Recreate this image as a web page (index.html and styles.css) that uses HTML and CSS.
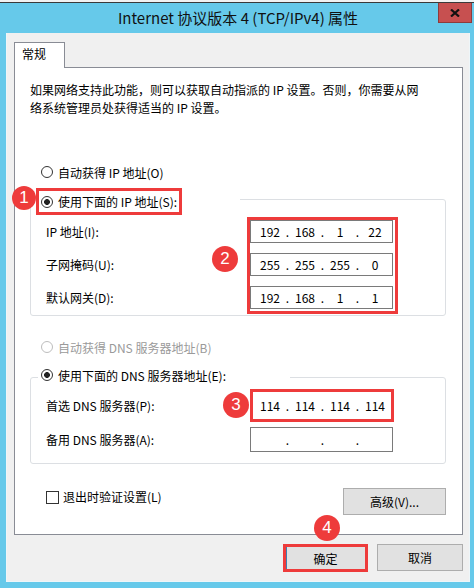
FILE: index.html
```html
<!DOCTYPE html>
<html lang="zh-CN">
<head>
<meta charset="UTF-8" />
<title>Internet 协议版本 4 (TCP/IPv4) 属性</title>
<link rel="stylesheet" href="styles.css">
</head>
<body>
<div class="strip"></div>
<div class="titlebar">
  <div class="title">Internet 协议版本 4 (TCP/IPv4) 属性</div>
  <div class="close"><svg width="10" height="8" viewBox="0 0 10 8"><path d="M1 0.5 L9 7.5 M9 0.5 L1 7.5" stroke="#111" stroke-width="2.2" fill="none"/></svg></div>
</div>
<div class="window">
  <div class="tab">常规</div>
  <div class="panel">
    <p class="desc">如果网络支持此功能，则可以获取自动指派的 IP 设置。否则，你需要从网<br>络系统管理员处获得适当的 IP 设置。</p>
    <div class="radio"><span class="dot"></span>自动获得 IP 地址(O)</div>

    <div class="group">
      <div class="legend">
        <span class="badge b1">1</span>
        <div class="mark"><span class="dot on"></span>使用下面的 IP 地址(S):</div>
      </div>
      <div class="rows">
        <div class="labels">
          <span>IP 地址(I):</span>
          <span>子网掩码(U):</span>
          <span>默认网关(D):</span>
        </div>
        <span class="badge b2">2</span>
        <div class="frame">
          <div class="ip"><b>192</b><i>.</i><b>168</b><i>.</i><b>1</b><i>.</i><b>22</b></div>
          <div class="ip"><b>255</b><i>.</i><b>255</b><i>.</i><b>255</b><i>.</i><b>0</b></div>
          <div class="ip"><b>192</b><i>.</i><b>168</b><i>.</i><b>1</b><i>.</i><b>1</b></div>
        </div>
      </div>
    </div>

    <div class="radio off"><span class="dot"></span>自动获得 DNS 服务器地址(B)</div>

    <div class="group g2">
      <div class="legend plain"><span class="dot on"></span>使用下面的 DNS 服务器地址(E):</div>
      <div class="dns">
        <span class="lbl">首选 DNS 服务器(P):</span>
        <div class="ip marked"><span class="badge b3">3</span><b>114</b><i>.</i><b>114</b><i>.</i><b>114</b><i>.</i><b>114</b></div>
        <span class="lbl">备用 DNS 服务器(A):</span>
        <div class="ip tall"><b></b><i>.</i><b></b><i>.</i><b></b><i>.</i><b></b></div>
      </div>
    </div>

    <div class="bottom">
      <div class="check"><span class="box"></span>退出时验证设置(L)</div>
      <button class="btn adv">高级(V)...</button>
    </div>
  </div>
  <div class="footer">
    <span class="badge b4">4</span>
    <button class="btn ok">确定</button>
    <button class="btn">取消</button>
  </div>
</div>
</body>
</html>
```
FILE: styles.css
```css
* { box-sizing: border-box; }
body { margin: 0; width: 474px; height: 588px; overflow: hidden; background: #66c9ea;
  font-family: "Noto Sans CJK SC", "Noto Sans", sans-serif; font-size: 12px; color: #000; }

.strip { height: 3px; background: #f2f2f2; border-bottom: 1px solid #3a3a3a; }
.titlebar { height: 30px; display: flex; align-items: flex-start; padding: 0 2px 0 38px; }
.title { flex: 1; text-align: center; font-size: 15px; line-height: 30px; color: #111; }
.close { width: 34px; height: 20px; background: #c75050; border: 1px solid #8e3b3b; border-top: 0;
  display: flex; align-items: center; justify-content: center; }

.window { margin: 0 4px 0 6px; height: 549px; background: #f0f0f0; border: 1px solid #eef6f9;
  border-top: 0; padding: 9px 6px 0 7px; }
.tab { position: relative; z-index: 1; width: 51px; height: 26px; margin-bottom: -1px;
  background: #fff; border: 1px solid #898c95; border-bottom: 0; padding-left: 7px; line-height: 22px; }
.panel { width: 449px; background: #fff; border: 1px solid #898c95; padding: 13px 0 19px; }

.desc { margin: 0 0 0 15px; line-height: 18px; }

.radio { display: flex; align-items: center; gap: 5px; height: 20px; margin: 45px 0 0 26px; }
.radio.off { margin-top: 21px; color: #9a9a9a; }
.radio.off .dot { border-color: #bdbdbd; }
.dot { flex: none; width: 12px; height: 12px; border: 1px solid #333; border-radius: 50%; background: #fff; }
.dot.on { background: radial-gradient(circle, #222 0 2.6px, #fff 3.2px); }

.group { display: flex; flex-direction: column; align-items: flex-start; margin: 17px 16px 0 15px;
  border: 1px solid #dcdfe3; border-radius: 3px; padding-bottom: 1px; }
.group.g2 { margin-top: 20px; padding-bottom: 11px; }
.legend { position: relative; margin: -12px 0 0 2px; padding-left: 3px; width: 207px; height: 27px; background: #fff; }
.legend.plain { display: flex; align-items: center; gap: 5px; margin: -13px 0 0 7px; padding: 0 4px 0 3px;
  width: 252px; height: 20px; }
.mark { display: inline-flex; align-items: center; gap: 5px; height: 27px; padding: 0 2px;
  border: 3px solid #ee3b3b; }

.rows { position: relative; display: flex; align-self: stretch; margin-top: 2px; }
.labels { width: 216px; padding: 3px 0 0 15px; display: flex; flex-direction: column; gap: 10px; }
.labels span { height: 23px; line-height: 23px; }
.frame { display: flex; flex-direction: column; gap: 10px; padding: 0 2px 2px 0; border: 3px solid #ee3b3b; }

.ip { position: relative; display: flex; align-items: center; width: 143px; height: 23px; padding-left: 4px;
  background: #fff; border: 1px solid #7a7a7a; }
.ip b { width: 30px; text-align: center; font-weight: normal; }
.ip i { width: 5px; text-align: center; font-style: normal; }
.ip.marked { width: 144px; height: 33px; padding-left: 2px; border: 3px solid #ee3b3b; }
.ip.tall { height: 25px; }

.dns { display: grid; grid-template-columns: 219px 144px; row-gap: 5px; align-items: center;
  align-self: stretch; margin-top: 4px; }
.lbl { padding-left: 15px; }

.bottom { display: flex; justify-content: space-between; align-items: flex-start; margin: 24px 16px 0 31px; }
.check { display: flex; align-items: center; gap: 4px; line-height: 18px; }
.box { width: 13px; height: 13px; border: 1px solid #333; background: #fff; }
.btn { width: 86px; height: 27px; padding: 0; background: #e1e1e1; border: 1px solid #adadad;
  font-family: inherit; font-size: 12px; color: #000; }
.btn.adv { width: 103px; }
.btn.ok { width: 85px; height: 28px; border: 3px solid #ee3b3b; box-shadow: inset 1px 0 0 #3c7fb1; }

.footer { position: relative; display: flex; justify-content: flex-end; align-items: flex-start; gap: 9px; margin-top: 9px; }

.badge { position: absolute; z-index: 2; width: 26px; height: 26px; border-radius: 50%; background: #ee3b3b;
  color: #fff; font: 17px/26px "Liberation Sans", Arial, sans-serif; text-align: center; }
.b1 { left: -21px; top: -2px; width: 24px; height: 24px; line-height: 24px; }
.b2 { left: 181px; top: 29px; }
.b3 { left: -30px; top: 0; }
.b4 { left: 300px; top: -29px; }
```
